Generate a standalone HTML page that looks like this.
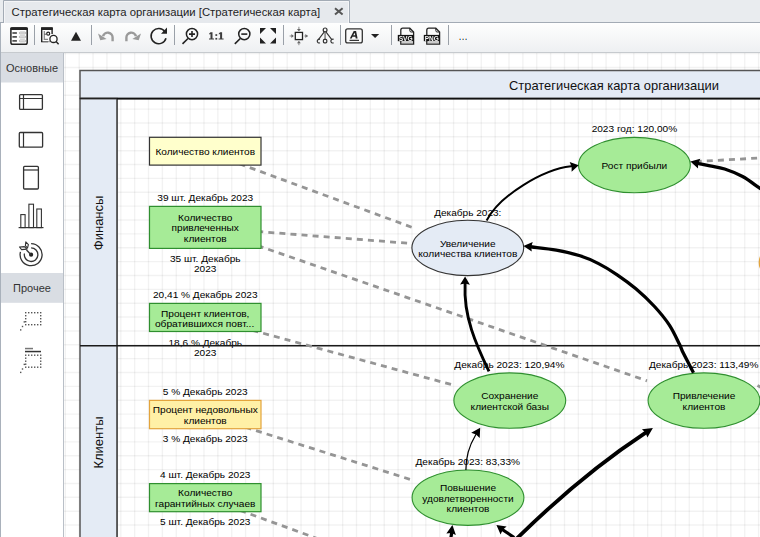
<!DOCTYPE html>
<html><head><meta charset="utf-8"><style>
html,body{margin:0;padding:0;width:760px;height:537px;overflow:hidden;background:#fff;}
svg{position:absolute;left:0;top:0;}
text{font-family:"Liberation Sans",sans-serif;}
</style></head><body>
<svg width="760" height="537" viewBox="0 0 760 537">
<!-- canvas -->
<rect x="64" y="53" width="696" height="484" fill="#fff"/>
<path d="M65.34 53V537M79.20 53V537M93.06 53V537M106.93 53V537M120.80 53V537M134.66 53V537M148.53 53V537M162.39 53V537M176.25 53V537M190.12 53V537M203.99 53V537M217.85 53V537M231.72 53V537M245.58 53V537M259.44 53V537M273.31 53V537M287.18 53V537M301.04 53V537M314.91 53V537M328.77 53V537M342.63 53V537M356.50 53V537M370.37 53V537M384.23 53V537M398.09 53V537M411.96 53V537M425.82 53V537M439.69 53V537M453.56 53V537M467.42 53V537M481.28 53V537M495.15 53V537M509.01 53V537M522.88 53V537M536.75 53V537M550.61 53V537M564.48 53V537M578.34 53V537M592.21 53V537M606.07 53V537M619.94 53V537M633.80 53V537M647.67 53V537M661.53 53V537M675.40 53V537M689.26 53V537M703.12 53V537M716.99 53V537M730.86 53V537M744.72 53V537M758.59 53V537" stroke="rgba(0,0,0,0.05)" stroke-width="1.4" fill="none"/>
<path d="M64 53.63H760M64 67.50H760M64 81.36H760M64 95.23H760M64 109.09H760M64 122.96H760M64 136.82H760M64 150.69H760M64 164.56H760M64 178.42H760M64 192.28H760M64 206.15H760M64 220.02H760M64 233.88H760M64 247.75H760M64 261.61H760M64 275.48H760M64 289.34H760M64 303.21H760M64 317.07H760M64 330.94H760M64 344.80H760M64 358.67H760M64 372.53H760M64 386.39H760M64 400.26H760M64 414.12H760M64 427.99H760M64 441.86H760M64 455.72H760M64 469.58H760M64 483.45H760M64 497.31H760M64 511.18H760M64 525.05H760" stroke="rgba(0,0,0,0.05)" stroke-width="1.4" fill="none"/>
<rect x="80" y="70.5" width="700" height="28" fill="#e4ebf5" stroke="#555" stroke-width="1.5"/>
<text x="614" y="89.9" font-size="13.6" fill="#111" text-anchor="middle" textLength="210" lengthAdjust="spacingAndGlyphs">Стратегическая карта организации</text>
<rect x="80" y="98.5" width="37" height="450" fill="#e4ebf5" stroke="#555" stroke-width="1.5"/>
<text transform="translate(103 222.9) rotate(-90)" font-size="13" fill="#111" text-anchor="middle">Финансы</text>
<text transform="translate(103 442.5) rotate(-90)" font-size="13" fill="#111" text-anchor="middle">Клиенты</text>
<text x="205.25" y="201.1" font-size="9.5" fill="#000" text-anchor="middle" textLength="95.92" lengthAdjust="spacingAndGlyphs">39 шт. Декабрь 2023</text>
<text x="205.25" y="261.8" font-size="9.5" fill="#000" text-anchor="middle" textLength="70.64" lengthAdjust="spacingAndGlyphs">35 шт. Декабрь</text>
<text x="205.25" y="272.1" font-size="9.5" fill="#000" text-anchor="middle" textLength="22.47" lengthAdjust="spacingAndGlyphs">2023</text>
<text x="205.25" y="297.9" font-size="9.5" fill="#000" text-anchor="middle" textLength="104.52" lengthAdjust="spacingAndGlyphs">20,41 % Декабрь 2023</text>
<text x="205.25" y="345.5" font-size="9.5" fill="#000" text-anchor="middle" textLength="73.63" lengthAdjust="spacingAndGlyphs">18,6 % Декабрь</text>
<text x="205.25" y="356" font-size="9.5" fill="#000" text-anchor="middle" textLength="22.47" lengthAdjust="spacingAndGlyphs">2023</text>
<text x="205.25" y="394.9" font-size="9.5" fill="#000" text-anchor="middle" textLength="84.86" lengthAdjust="spacingAndGlyphs">5 % Декабрь 2023</text>
<text x="205.25" y="441.7" font-size="9.5" fill="#000" text-anchor="middle" textLength="84.86" lengthAdjust="spacingAndGlyphs">3 % Декабрь 2023</text>
<text x="205.25" y="477.9" font-size="9.5" fill="#000" text-anchor="middle" textLength="90.30" lengthAdjust="spacingAndGlyphs">4 шт. Декабрь 2023</text>
<text x="205.25" y="525.4" font-size="9.5" fill="#000" text-anchor="middle" textLength="90.30" lengthAdjust="spacingAndGlyphs">5 шт. Декабрь 2023</text>
<path d="M117.2 99.2V537" stroke="#555" stroke-width="1.5"/>
<path d="M80 98.5H117" stroke="#222" stroke-width="1.5"/>
<path d="M117 98.6H760" stroke="#111" stroke-width="1.9"/>
<path d="M80 345.8H760" stroke="#1a1a1a" stroke-width="1.6"/>
<path d="M205.25 151.20L412.20 227.42" stroke="#959595" stroke-width="2.8" stroke-dasharray="6 5.1" stroke-dashoffset="8.04" fill="none"/>
<path d="M205.25 227.40L407.70 243.21" stroke="#959595" stroke-width="2.8" stroke-dasharray="6 5.1" stroke-dashoffset="3.35" fill="none"/>
<path d="M205.25 227.40L647.00 380.81" stroke="#959595" stroke-width="2.8" stroke-dasharray="6 5.1" stroke-dashoffset="11.10" fill="none"/>
<path d="M205.25 317.45L451.60 384.63" stroke="#959595" stroke-width="2.8" stroke-dasharray="6 5.1" stroke-dashoffset="6.58" fill="none"/>
<path d="M205.25 414.55L411.10 479.69" stroke="#959595" stroke-width="2.8" stroke-dasharray="6 5.1" stroke-dashoffset="2.23" fill="none"/>
<path d="M205.25 497.65L505.25 607.24" stroke="#959595" stroke-width="2.8" stroke-dasharray="6 5.1" stroke-dashoffset="7.27" fill="none"/>
<path d="M634.40 165.10L800.00 155.66" stroke="#959595" stroke-width="2.8" stroke-dasharray="6 5.1" stroke-dashoffset="5.18" fill="none"/>
<path d="M757.5 385.6L761 387.4" stroke="#959595" stroke-width="2.8"/>
<ellipse cx="815.2" cy="262.4" rx="55.9" ry="27.7" fill="#fff0a6" stroke="#e3a43c" stroke-width="1.3"/>
<rect x="149.5" y="137.3" width="111.5" height="27.8" fill="#ffffcc" stroke="#333" stroke-width="1.2"/>
<text x="205.25" y="155.2" font-size="9.5" fill="#000" text-anchor="middle" textLength="99.60" lengthAdjust="spacingAndGlyphs">Количество клиентов</text>
<rect x="149.5" y="206.4" width="111.5" height="42.0" fill="#a6eb97" stroke="#2f8f2f" stroke-width="1.2"/>
<text x="205.25" y="221" font-size="9.5" fill="#000" text-anchor="middle" textLength="54.24" lengthAdjust="spacingAndGlyphs">Количество</text>
<text x="205.25" y="231.3" font-size="9.5" fill="#000" text-anchor="middle" textLength="67.38" lengthAdjust="spacingAndGlyphs">привлеченных</text>
<text x="205.25" y="241.6" font-size="9.5" fill="#000" text-anchor="middle" textLength="42.76" lengthAdjust="spacingAndGlyphs">клиентов</text>
<rect x="149.5" y="303.4" width="111.5" height="28.1" fill="#a6eb97" stroke="#2f8f2f" stroke-width="1.2"/>
<text x="205.25" y="316.5" font-size="9.5" fill="#000" text-anchor="middle" textLength="88.36" lengthAdjust="spacingAndGlyphs">Процент клиентов,</text>
<text x="204.6" y="326.7" font-size="9.5" fill="#000" text-anchor="middle" textLength="99.40" lengthAdjust="spacingAndGlyphs">обратившихся повт...</text>
<rect x="149.5" y="400.4" width="111.5" height="28.3" fill="#fff0a6" stroke="#e3a43c" stroke-width="1.2"/>
<text x="205.25" y="413" font-size="9.5" fill="#000" text-anchor="middle" textLength="104.97" lengthAdjust="spacingAndGlyphs">Процент недовольных</text>
<text x="205.25" y="423.5" font-size="9.5" fill="#000" text-anchor="middle" textLength="42.76" lengthAdjust="spacingAndGlyphs">клиентов</text>
<rect x="149.5" y="483.6" width="111.5" height="28.1" fill="#a6eb97" stroke="#2f8f2f" stroke-width="1.2"/>
<text x="205.25" y="495.7" font-size="9.5" fill="#000" text-anchor="middle" textLength="54.24" lengthAdjust="spacingAndGlyphs">Количество</text>
<text x="205.25" y="506.5" font-size="9.5" fill="#000" text-anchor="middle" textLength="100.35" lengthAdjust="spacingAndGlyphs">гарантийных случаев</text>
<ellipse cx="634.4" cy="165.1" rx="55.9" ry="27.7" fill="#a6eb97" stroke="#2f8f2f" stroke-width="1.1"/>
<text x="634.4" y="169" font-size="9.5" fill="#000" text-anchor="middle" textLength="65.70" lengthAdjust="spacingAndGlyphs">Рост прибыли</text>
<ellipse cx="467.8" cy="247.9" rx="55.9" ry="27.7" fill="#e4ebf5" stroke="#333" stroke-width="1.1"/>
<text x="467.8" y="247.1" font-size="9.5" fill="#000" text-anchor="middle" textLength="55.63" lengthAdjust="spacingAndGlyphs">Увеличение</text>
<text x="467.8" y="256.9" font-size="9.5" fill="#000" text-anchor="middle" textLength="99.00" lengthAdjust="spacingAndGlyphs">количества клиентов</text>
<ellipse cx="509.8" cy="400.6" rx="55.9" ry="27.7" fill="#a6eb97" stroke="#2f8f2f" stroke-width="1.1"/>
<text x="509.8" y="399.1" font-size="9.5" fill="#000" text-anchor="middle" textLength="57.11" lengthAdjust="spacingAndGlyphs">Сохранение</text>
<text x="509.8" y="409.7" font-size="9.5" fill="#000" text-anchor="middle" textLength="78.37" lengthAdjust="spacingAndGlyphs">клиентской базы</text>
<ellipse cx="704" cy="400.6" rx="55.9" ry="27.7" fill="#a6eb97" stroke="#2f8f2f" stroke-width="1.1"/>
<text x="704" y="399.1" font-size="9.5" fill="#000" text-anchor="middle" textLength="62.54" lengthAdjust="spacingAndGlyphs">Привлечение</text>
<text x="704" y="409.7" font-size="9.5" fill="#000" text-anchor="middle" textLength="42.76" lengthAdjust="spacingAndGlyphs">клиентов</text>
<ellipse cx="468" cy="497.7" rx="55.9" ry="27.7" fill="#a6eb97" stroke="#2f8f2f" stroke-width="1.1"/>
<text x="468" y="491" font-size="9.5" fill="#000" text-anchor="middle" textLength="56.06" lengthAdjust="spacingAndGlyphs">Повышение</text>
<text x="468" y="501.7" font-size="9.5" fill="#000" text-anchor="middle" textLength="91.35" lengthAdjust="spacingAndGlyphs">удовлетворенности</text>
<text x="468" y="511.6" font-size="9.5" fill="#000" text-anchor="middle" textLength="42.76" lengthAdjust="spacingAndGlyphs">клиентов</text>
<text x="634.4" y="131.8" font-size="9.5" fill="#000" text-anchor="middle" textLength="85.51" lengthAdjust="spacingAndGlyphs">2023 год: 120,00%</text>
<text x="467.8" y="215.5" font-size="9.5" fill="#000" text-anchor="middle" textLength="67.20" lengthAdjust="spacingAndGlyphs">Декабрь 2023:</text>
<text x="509.4" y="368.2" font-size="9.5" fill="#000" text-anchor="middle" textLength="110.14" lengthAdjust="spacingAndGlyphs">Декабрь 2023: 120,94%</text>
<text x="703.7" y="368.2" font-size="9.5" fill="#000" text-anchor="middle" textLength="109.39" lengthAdjust="spacingAndGlyphs">Декабрь 2023: 113,49%</text>
<text x="467.8" y="465.2" font-size="9.5" fill="#000" text-anchor="middle" textLength="104.52" lengthAdjust="spacingAndGlyphs">Декабрь 2023: 83,33%</text>
<path d="M486.6 220.5C500.0 195.1 543.0 169.5 571.0 166.3L574.68 166.09" stroke="#000" stroke-width="2.0" fill="none"/>
<path d="M578.70 165.30L571.62 171.79L571.62 166.70L569.69 161.98Z" fill="#000"/>
<path d="M693.5 372.7C691.80 369.43 685.62 357.78 683.30 353.10C680.98 348.42 681.92 349.27 679.60 344.60C677.28 339.93 673.58 331.45 669.40 325.10C665.22 318.75 660.08 312.55 654.50 306.50C648.92 300.45 642.12 294.08 635.90 288.80C629.68 283.52 623.42 279.00 617.20 274.80C610.98 270.60 604.80 266.77 598.60 263.60C592.40 260.43 587.05 258.05 580.00 255.80C572.95 253.55 564.25 251.57 556.30 250.10C548.35 248.63 536.30 247.52 532.30 247.00L527.83 246.35" stroke="#000" stroke-width="3.3" fill="none"/>
<path d="M523.40 245.90L532.74 242.02L531.19 246.69L531.77 251.57Z" fill="#000"/>
<path d="M764.0 191.0C763.17 190.45 762.57 190.12 759.00 187.70C755.43 185.28 748.32 179.62 742.60 176.50C736.88 173.38 730.13 170.78 724.70 169.00C719.27 167.22 714.28 166.70 710.00 165.80C705.72 164.90 700.83 163.97 699.00 163.60L694.78 162.62" stroke="#000" stroke-width="3.3" fill="none"/>
<path d="M690.40 161.60L700.30 158.77L698.11 163.39L698.03 168.51Z" fill="#000"/>
<path d="M489.0 371.4C475.9 344.2 463.4 316.1 465.1 284.5L465.05 280.50" stroke="#000" stroke-width="2.9" fill="none"/>
<path d="M465.10 276.40L469.90 284.66L465.01 283.62L460.10 284.54Z" fill="#000"/>
<path d="M465.9 470.0C465.8 457.4 469.7 444.9 475.5 435.3L477.83 431.52" stroke="#000" stroke-width="1.25" fill="none"/>
<path d="M480.20 427.70L479.71 437.98L476.03 434.43L471.21 432.71Z" fill="#000"/>
<path d="M515.3 540C556.1 499.9 598.4 463.8 644.65 433.4L648.78 430.75" stroke="#000" stroke-width="3.8" fill="none"/>
<path d="M652.90 428.10L647.36 437.60L645.64 432.76L641.95 429.19Z" fill="#000"/>
<path d="M450.5 540L451.5 534L451.76 529.65" stroke="#000" stroke-width="3.2" fill="none"/>
<path d="M452.40 525.10L455.87 534.88L451.27 533.12L446.36 533.54Z" fill="#000"/>
<path d="M514.2 537.5L503 530L500.00 527.80" stroke="#000" stroke-width="3.2" fill="none"/>
<path d="M496.40 525.10L506.60 526.50L502.74 529.85L500.60 534.50Z" fill="#000"/>
<!-- tab bar -->
<rect x="0" y="0" width="760" height="23" fill="#e9ecef"/>
<rect x="0" y="22" width="760" height="1" fill="#a3abb5"/>
<rect x="3" y="0" width="347" height="23" fill="#e6e9ed"/>
<path d="M3.5 23V0.5H349.5V23" fill="none" stroke="#a3abb5" stroke-width="1"/>
<path d="M4.5 23V1.5H348.5V23" fill="none" stroke="#f4f5f7" stroke-width="1"/>
<text x="11.6" y="16" font-size="11.3" fill="#1e1e1e" textLength="308.5" lengthAdjust="spacing">Стратегическая карта организации [Стратегическая карта]</text>
<path d="M335 8.3L342.6 14.6M342.6 8.3L335 14.6" stroke="#555" stroke-width="2"/>
<!-- toolbar -->
<defs><filter id="gray" x="-10%" y="-10%" width="120%" height="120%"><feColorMatrix type="identity"/></filter><linearGradient id="tg" x1="0" y1="0" x2="0" y2="1"><stop offset="0" stop-color="#fefefe"/><stop offset="1" stop-color="#eef0f2"/></linearGradient></defs>
<rect x="0" y="23" width="760" height="29" fill="url(#tg)"/>
<rect x="0" y="52" width="760" height="1" fill="#c6cace"/>
<rect x="34.0" y="25" width="1" height="20" fill="#9aa0a8"/>
<rect x="91.0" y="25" width="1" height="20" fill="#9aa0a8"/>
<rect x="174.0" y="25" width="1" height="20" fill="#9aa0a8"/>
<rect x="283.0" y="25" width="1" height="20" fill="#9aa0a8"/>
<rect x="340.0" y="25" width="1" height="20" fill="#9aa0a8"/>
<rect x="391.0" y="25" width="1" height="20" fill="#9aa0a8"/>
<rect x="448.0" y="25" width="1" height="20" fill="#9aa0a8"/>
<rect x="10.9" y="28" width="16.3" height="16.3" rx="1.8" fill="#fdfdfd" stroke="#222" stroke-width="1.5"/>
<rect x="10.2" y="27.2" width="17.7" height="2.9" rx="1" fill="#222"/>
<rect x="12.4" y="32.25" width="4.5" height="1.5" fill="#333"/>
<rect x="19.4" y="32.05" width="6.2" height="1.9" rx="0.95" fill="#f2f2f2" stroke="#9a9a9a" stroke-width="0.7"/>
<rect x="12.4" y="36.15" width="4.5" height="1.5" fill="#333"/>
<rect x="19.4" y="35.949999999999996" width="6.2" height="1.9" rx="0.95" fill="#f2f2f2" stroke="#9a9a9a" stroke-width="0.7"/>
<rect x="12.4" y="40.15" width="4.5" height="1.5" fill="#333"/>
<rect x="19.4" y="39.949999999999996" width="6.2" height="1.9" rx="0.95" fill="#f2f2f2" stroke="#9a9a9a" stroke-width="0.7"/>
<path d="M52.1 34V28.2H41.7V41.6H48" fill="#fdfdfd" stroke="#222" stroke-width="1.4"/>
<rect x="41" y="27.2" width="11.8" height="2.8" rx="0.8" fill="#222"/>
<rect x="42.4" y="41.2" width="8" height="1" fill="#888"/>
<path d="M44.3 31V39.3H48" fill="none" stroke="#888" stroke-width="1.2"/>
<circle cx="48.2" cy="33.7" r="1.5" fill="none" stroke="#222" stroke-width="1.2"/>
<path d="M44.3 34.2H46.6" stroke="#555" stroke-width="1"/>
<circle cx="53.5" cy="38.9" r="3.6" fill="#fdfdfd" stroke="#222" stroke-width="1.3"/>
<path d="M56.1 41.5L58.6 44.3" stroke="#222" stroke-width="1.4"/>
<path d="M71 40.8L76 31.8L81 40.8Z" fill="#222"/>
<path d="M103 36.2A4.9 4.9 0 0 1 112.6 37.8V41.2" fill="none" stroke="#9a9a9a" stroke-width="2.4"/>
<path d="M98 33.6L100.3 40.2L106.6 38.9Z" fill="#9a9a9a"/>
<g transform="translate(239 0) scale(-1 1)"><path d="M103 36.2A4.9 4.9 0 0 1 112.6 37.8V41.2" fill="none" stroke="#9a9a9a" stroke-width="2.4"/><path d="M98 33.6L100.3 40.2L106.6 38.9Z" fill="#9a9a9a"/></g>
<g transform="translate(-0.6 -0.8)"><path d="M165.5 32.5A7.6 7.6 0 1 0 166.6 39" fill="none" stroke="#222" stroke-width="1.6"/>
<path d="M167.6 28.3V34.6H161.6Z" fill="#222"/></g>
<circle cx="192" cy="34.1" r="5.6" fill="none" stroke="#222" stroke-width="1.5"/>
<path d="M188 38.5L182.5 43.8" stroke="#222" stroke-width="1.6"/>
<path d="M189 34.1H195M192 31.1V37.1" stroke="#222" stroke-width="1.6"/>
<path d="M210.5 32.3H212.5V38.6H214V39.6H209V38.6H210.5V33.9L209.2 34.5V33.5Z" fill="#3c3c3c"/>
<path d="M220.1 32.3H222.1V38.6H223.6V39.6H218.6V38.6H220.1V33.9L218.79999999999998 34.5V33.5Z" fill="#3c3c3c"/>
<rect x="215.4" y="34.2" width="1.8" height="1.7" fill="#3c3c3c"/><rect x="215.4" y="37.9" width="1.8" height="1.7" fill="#3c3c3c"/>
<circle cx="244.3" cy="34.1" r="5.6" fill="none" stroke="#222" stroke-width="1.5"/>
<path d="M240.3 38.5L234.8 43.8" stroke="#222" stroke-width="1.6"/>
<path d="M241.3 34.1H247.3" stroke="#222" stroke-width="1.6"/>
<path d="M260 28H266L260 34Z M276 28H270L276 34Z M260 43.5H266L260 37.5Z M276 43.5H270L276 37.5Z" fill="#222"/>
<rect x="295.3" y="32.4" width="7.2" height="7.2" fill="#fafafa" stroke="#222" stroke-width="1.3"/>
<path d="M298.9 26.8V30.6M298.9 41.4V45.2M289.6 36H293.2M304.4 36H308" stroke="#888" stroke-width="1"/>
<path d="M296.9 29H300.9L298.9 31.2Z M296.9 43.2H300.9L298.9 41Z M291.4 34V38L293.7 36Z M305.4 34V38L307.7 36Z" fill="#666"/>
<circle cx="325.1" cy="29.9" r="1.9" fill="none" stroke="#333" stroke-width="1.2"/>
<path d="M325.1 31.9V39.5" stroke="#888" stroke-width="1.6"/>
<path d="M324.3 31.8L318.2 39.8M325.9 31.8L332 39.8" stroke="#333" stroke-width="1.1"/>
<path d="M320 39.4A1.9 1.9 0 1 0 320 42.8M333.6 39.4A1.9 1.9 0 1 0 333.6 42.8" fill="none" stroke="#333" stroke-width="1.2"/>
<rect x="323.4" y="39.4" width="3.4" height="3.4" rx="1" fill="none" stroke="#333" stroke-width="1.2"/>
<rect x="345.7" y="28.9" width="16.6" height="14" rx="2" fill="#fafafa" stroke="#333" stroke-width="1.3"/>
<path d="M349.8 38.5L353.7 31.1H356.1L357.6 38.5H355.7L355.4 36.8H352.5L351.7 38.5Z M353.2 35.3H355.2L354.8 32.7Z" fill="#262626" fill-rule="evenodd"/>
<rect x="349.5" y="39.8" width="9.5" height="1.1" fill="#222"/>
<path d="M371 34H379.2L375.1 38Z" fill="#222"/>
<path d="M400.8 30.2Q400.8 28.2 402.8 28.2H409.8L413.6 32V44.2H400.8Z" fill="#fafafa" stroke="#222" stroke-width="1.3"/>
<path d="M409.8 28.4V30.6Q409.8 32 411.2 32H413.4" fill="none" stroke="#222" stroke-width="1"/>
<rect x="401.5" y="42.6" width="11.4" height="1" fill="#888"/>
<rect x="397.8" y="34.9" width="15.8" height="6.3" fill="#111"/>
<g filter="url(#gray)"><text x="405.7" y="40.6" font-family="Liberation Sans" font-weight="bold" font-size="6.6" fill="#f4f4f4" text-anchor="middle" textLength="14" lengthAdjust="spacingAndGlyphs">SVG</text></g>
<path d="M426.8 30.2Q426.8 28.2 428.8 28.2H435.8L439.6 32V44.2H426.8Z" fill="#fafafa" stroke="#222" stroke-width="1.3"/>
<path d="M435.8 28.4V30.6Q435.8 32 437.2 32H439.4" fill="none" stroke="#222" stroke-width="1"/>
<rect x="427.5" y="42.6" width="11.4" height="1" fill="#888"/>
<rect x="423.8" y="34.9" width="15.8" height="6.3" fill="#111"/>
<g filter="url(#gray)"><text x="431.7" y="40.6" font-family="Liberation Sans" font-weight="bold" font-size="6.6" fill="#f4f4f4" text-anchor="middle" textLength="14" lengthAdjust="spacingAndGlyphs">PNG</text></g>
<rect x="459" y="38.7" width="1" height="1.3" fill="#e9a24a"/><rect x="460" y="38.7" width="1" height="1.3" fill="#3d8de0"/>
<rect x="462" y="38.7" width="1" height="1.3" fill="#e9a24a"/><rect x="463" y="38.7" width="1" height="1.3" fill="#3d8de0"/>
<rect x="465" y="38.7" width="1" height="1.3" fill="#e9a24a"/><rect x="466" y="38.7" width="1" height="1.3" fill="#3d8de0"/>
<!-- sidebar -->
<rect x="0" y="53" width="63" height="484" fill="#fff"/>
<rect x="1" y="53" width="62" height="29.5" fill="#d9dde3"/>
<rect x="1" y="273" width="62" height="29.8" fill="#d9dde3"/>
<rect x="63" y="53" width="1" height="484" fill="#b9bfc7"/>
<rect x="0" y="23" width="1" height="514" fill="#a9b1bb"/>
<text x="32" y="72" font-size="11" fill="#333" text-anchor="middle">Основные</text>
<text x="32" y="292" font-size="11" fill="#333" text-anchor="middle">Прочее</text>
<rect x="19.6" y="94.6" width="22.8" height="14.8" rx="1" fill="none" stroke="#333" stroke-width="1.3"/>
<path d="M19.6 98.5H42.4M23.5 94.6V109.4" stroke="#333" stroke-width="1.2"/>
<rect x="19.3" y="132.5" width="23.3" height="14.7" rx="1" fill="none" stroke="#333" stroke-width="1.3"/>
<path d="M23.5 132.5V147.2" stroke="#333" stroke-width="1.2"/>
<rect x="23.6" y="166.4" width="14.8" height="22.6" rx="1" fill="none" stroke="#333" stroke-width="1.3"/>
<path d="M23.6 170H38.4" stroke="#333" stroke-width="1.2"/>
<path d="M18.6 227.6H43.5" stroke="#333" stroke-width="1.2"/>
<rect x="20.8" y="214.6" width="4.3" height="13" fill="none" stroke="#333" stroke-width="1.1"/>
<rect x="28.9" y="204.2" width="4.6" height="23.4" fill="none" stroke="#333" stroke-width="1.1"/>
<rect x="36.8" y="209" width="4.6" height="18.6" fill="none" stroke="#333" stroke-width="1.1"/>
<path d="M31.1 243.7A11 11 0 1 1 20.47 251.85" fill="none" stroke="#333" stroke-width="1.3"/>
<path d="M31.1 247.9A6.8 6.8 0 1 1 24.4 253.5" fill="none" stroke="#333" stroke-width="1.3"/>
<circle cx="31.1" cy="254.7" r="2.1" fill="#222"/>
<path d="M31.1 254.7L26.5 250" stroke="#333" stroke-width="1.3"/>
<path d="M25.8 241.9L28.4 244.6L27.5 248L25.4 245.6Z M19.5 247L24.4 246.6L27 249.1L21.6 249.6Z" fill="none" stroke="#333" stroke-width="1.1" stroke-linejoin="round"/>
<rect x="25" y="312" width="1.4" height="1.4" fill="#555"/>
<rect x="25" y="324" width="1.4" height="1.4" fill="#555"/>
<rect x="28" y="312" width="1.4" height="1.4" fill="#555"/>
<rect x="28" y="324" width="1.4" height="1.4" fill="#555"/>
<rect x="31" y="312" width="1.4" height="1.4" fill="#555"/>
<rect x="31" y="324" width="1.4" height="1.4" fill="#555"/>
<rect x="34" y="312" width="1.4" height="1.4" fill="#555"/>
<rect x="34" y="324" width="1.4" height="1.4" fill="#555"/>
<rect x="37" y="312" width="1.4" height="1.4" fill="#555"/>
<rect x="37" y="324" width="1.4" height="1.4" fill="#555"/>
<rect x="40" y="312" width="1.4" height="1.4" fill="#555"/>
<rect x="40" y="324" width="1.4" height="1.4" fill="#555"/>
<rect x="25" y="315" width="1.4" height="1.4" fill="#555"/>
<rect x="40" y="315" width="1.4" height="1.4" fill="#555"/>
<rect x="25" y="318" width="1.4" height="1.4" fill="#555"/>
<rect x="40" y="318" width="1.4" height="1.4" fill="#555"/>
<rect x="25" y="321" width="1.4" height="1.4" fill="#555"/>
<rect x="40" y="321" width="1.4" height="1.4" fill="#555"/>
<rect x="23.6" y="321.2" width="1.4" height="1.4" fill="#555"/>
<rect x="21.8" y="325.8" width="1.4" height="1.4" fill="#555"/>
<rect x="20" y="329.2" width="1.4" height="1.4" fill="#555"/>
<rect x="25" y="347.8" width="8" height="1.5" fill="#777"/>
<rect x="25" y="350.8" width="16" height="1.5" fill="#333"/>
<rect x="25" y="354.5" width="1.4" height="1.4" fill="#555"/>
<rect x="25" y="366.5" width="1.4" height="1.4" fill="#555"/>
<rect x="28" y="354.5" width="1.4" height="1.4" fill="#555"/>
<rect x="28" y="366.5" width="1.4" height="1.4" fill="#555"/>
<rect x="31" y="354.5" width="1.4" height="1.4" fill="#555"/>
<rect x="31" y="366.5" width="1.4" height="1.4" fill="#555"/>
<rect x="34" y="354.5" width="1.4" height="1.4" fill="#555"/>
<rect x="34" y="366.5" width="1.4" height="1.4" fill="#555"/>
<rect x="37" y="354.5" width="1.4" height="1.4" fill="#555"/>
<rect x="37" y="366.5" width="1.4" height="1.4" fill="#555"/>
<rect x="40" y="354.5" width="1.4" height="1.4" fill="#555"/>
<rect x="40" y="366.5" width="1.4" height="1.4" fill="#555"/>
<rect x="25" y="357.5" width="1.4" height="1.4" fill="#555"/>
<rect x="40" y="357.5" width="1.4" height="1.4" fill="#555"/>
<rect x="25" y="360.5" width="1.4" height="1.4" fill="#555"/>
<rect x="40" y="360.5" width="1.4" height="1.4" fill="#555"/>
<rect x="25" y="363.5" width="1.4" height="1.4" fill="#555"/>
<rect x="40" y="363.5" width="1.4" height="1.4" fill="#555"/>
<rect x="23.6" y="363.7" width="1.4" height="1.4" fill="#555"/>
<rect x="21.8" y="368.3" width="1.4" height="1.4" fill="#555"/>
<rect x="20" y="371.7" width="1.4" height="1.4" fill="#555"/>
</svg>
</body></html>
